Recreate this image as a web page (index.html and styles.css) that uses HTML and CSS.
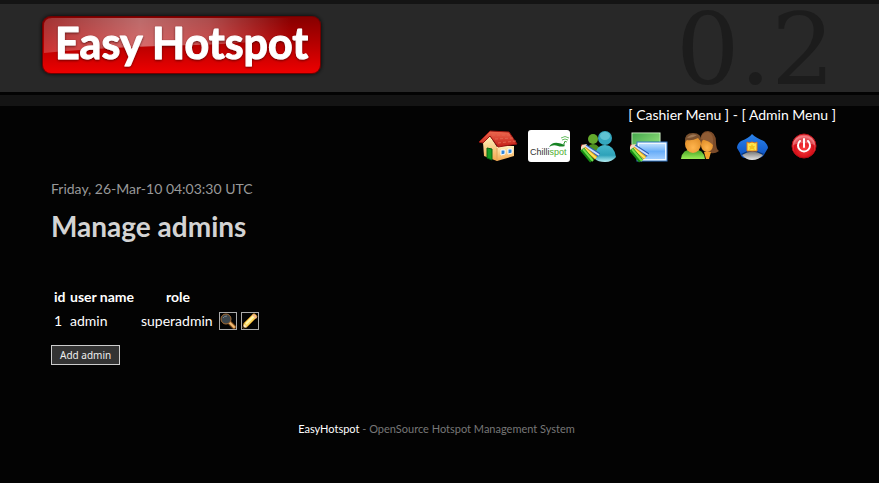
FILE: index.html
```html
<!DOCTYPE html>
<html lang="en">
<head>
    <meta charset="UTF-8">
    <meta name="viewport" content="width=device-width, initial-scale=1.0">
    <title>Easy Hotspot - Manage admins</title>
    <link rel="stylesheet" href="styles.css">
</head>
<body>
    <header class="header">
        <a class="logo" href="#" aria-label="Easy Hotspot">
            <svg width="292" height="76" viewBox="0 0 292 76">
                <defs>
                    <linearGradient id="logo-red" x1="0" y1="0" x2="0" y2="1">
                        <stop offset="0" stop-color="#860000"/>
                        <stop offset="0.5" stop-color="#b80000"/>
                        <stop offset="1" stop-color="#ee0000"/>
                    </linearGradient>
                    <linearGradient id="logo-shine" x1="0" y1="0" x2="1" y2="0">
                        <stop offset="0" stop-color="#fff" stop-opacity="0.2"/>
                        <stop offset="0.35" stop-color="#fff" stop-opacity="0.42"/>
                        <stop offset="0.6" stop-color="#fff" stop-opacity="0.3"/>
                        <stop offset="0.9" stop-color="#fff" stop-opacity="0"/>
                    </linearGradient>
                    <filter id="logo-shadow" x="-10%" y="-20%" width="120%" height="140%">
                        <feDropShadow dx="0" dy="0" stdDeviation="2" flood-color="#000" flood-opacity="0.9"/>
                    </filter>
                    <filter id="text-shadow" x="-10%" y="-20%" width="120%" height="150%">
                        <feDropShadow dx="0" dy="1" stdDeviation="1" flood-color="#300" flood-opacity="0.7"/>
                    </filter>
                </defs>
                <rect x="6" y="7" width="279" height="58" rx="9" fill="#700000" filter="url(#logo-shadow)"/>
                <rect x="7" y="8" width="277" height="56" rx="8" fill="url(#logo-red)"/>
                <path d="M16 9H274Q283 9 283 16V24Q230 34 160 36Q70 38 8 44V17Q8 9 16 9Z" fill="url(#logo-shine)"/>
                <text class="logo-text" x="19" y="50" filter="url(#text-shadow)">Easy Hotspot</text>
            </svg>
        </a>
        <span class="version">0.2</span>
    </header>

    <nav class="nav">
        <div class="menu-links">
            <a href="#">[ Cashier Menu ]</a> - <a href="#">[ Admin Menu ]</a>
        </div>
        <div class="menu-icons">
            <a href="#" aria-label="Home">
                <svg width="42" height="36" viewBox="0 0 42 36">
                    <defs>
                        <linearGradient id="wall" x1="0" y1="0" x2="0" y2="1">
                            <stop offset="0" stop-color="#fff3c0"/>
                            <stop offset="1" stop-color="#f3a64d"/>
                        </linearGradient>
                        <linearGradient id="roof" x1="0" y1="0" x2="0" y2="1">
                            <stop offset="0" stop-color="#ef6a50"/>
                            <stop offset="1" stop-color="#c41f17"/>
                        </linearGradient>
                    </defs>
                    <path d="M6 14L13 8L20 19V33L7 28Z" fill="url(#wall)"/>
                    <path d="M20 18H37V28L20 33Z" fill="url(#wall)"/>
                    <path d="M10 20L15 21V32L10 30Z" fill="#159b22" stroke="#096410"/>
                    <path d="M13 3L32 4L40 16L21 19L13 8L6 15L2 14Z" fill="url(#roof)" stroke="#9c1712"/>
                    <path d="M15 7H33M18 11L36 10M21 15L39 13" fill="none" stroke="#e3644f" stroke-width="1" stroke-dasharray="3 2"/>
                    <path d="M24 22H28V26L24 27ZM31 21H35V25L31 26Z" fill="#2f86dc" stroke="#fff"/>
                    <path d="M20 33V20" stroke="#e0a258"/>
                </svg>
            </a>
            <a href="#" aria-label="Chillispot">
                <svg width="42" height="36" viewBox="0 0 42 36">
                    <rect x="0" y="2" width="42" height="32" rx="3" fill="#fff"/>
                    <path d="M21 19Q24 14 30 15Q36 16 37 18Q33 19 30 18Q25 16 21 19Z" fill="#168323"/>
                    <path d="M36 17Q35 15 38 13" fill="none" stroke="#168323" stroke-width="1"/>
                    <path d="M33 10Q37 7 41 10M34 12Q37 10 40 12M36 14Q37 13 39 14" fill="none" stroke="#68bd62" stroke-width="1"/>
                    <text class="chilli-text" x="2" y="27">Chilli<tspan fill="#4faf2f">spot</tspan></text>
                </svg>
            </a>
            <a href="#" aria-label="Manage accounts">
                <svg width="42" height="36" viewBox="0 0 42 36">
                    <defs>
                        <linearGradient id="teal" x1="0" y1="0" x2="0" y2="1">
                            <stop offset="0" stop-color="#47b9cd"/>
                            <stop offset="0.6" stop-color="#2ea2b9"/>
                            <stop offset="1" stop-color="#b5f0f4"/>
                        </linearGradient>
                        <g id="pens">
                            <path d="M6 18L20 27" stroke="#2a5db8" stroke-width="4"/>
                            <path d="M6 18L20 27" stroke="#c8dcff" stroke-width="2"/>
                            <path d="M5 20L17 30" stroke="#e2a31c" stroke-width="4"/>
                            <path d="M5 20L17 30" stroke="#ffe45c" stroke-width="2"/>
                            <path d="M3 21L13 33" stroke="#168a14" stroke-width="5"/>
                            <path d="M4 21L14 33" stroke="#6fdf48" stroke-width="2"/>
                            <path d="M2 22L2 17L8 16L6 19Z" fill="#f1dcc0"/>
                            <path d="M2 19V17L4 16Z" fill="#b22323"/>
                        </g>
                    </defs>
                    <circle cx="14" cy="11" r="5" fill="#64a92c"/>
                    <path d="M7 26Q8 16 14 16Q21 16 22 27Z" fill="#4d9020"/>
                    <path d="M16 31Q16 17 26 17Q35 17 37 29Q33 34 26 34Q19 34 16 31Z" fill="url(#teal)"/>
                    <circle cx="26" cy="10" r="7" fill="#35a8bf"/>
                    <ellipse cx="26" cy="8" rx="5" ry="4" fill="#7cd3e0" opacity="0.6"/>
                    <use href="#pens"/>
                </svg>
            </a>
            <a href="#" aria-label="Manage plans">
                <svg width="42" height="36" viewBox="0 0 42 36">
                    <defs>
                        <linearGradient id="green-card" x1="0" y1="0" x2="1" y2="1">
                            <stop offset="0" stop-color="#159220"/>
                            <stop offset="1" stop-color="#8ce667"/>
                        </linearGradient>
                        <linearGradient id="blue-card" x1="0" y1="0" x2="0" y2="1">
                            <stop offset="0" stop-color="#c8e5ff"/>
                            <stop offset="0.5" stop-color="#6aaef8"/>
                            <stop offset="1" stop-color="#a7d1ff"/>
                        </linearGradient>
                    </defs>
                    <rect x="2" y="5" width="28" height="19" fill="url(#green-card)" stroke="#d8f7ce" stroke-width="1"/>
                    <path d="M3 6H29V13Q15 13 3 18Z" fill="#fff" opacity="0.2"/>
                    <rect x="8" y="15" width="28" height="17" fill="url(#blue-card)" stroke="#eef7ff" stroke-width="2"/>
                    <rect x="7" y="14" width="30" height="19" fill="none" stroke="#3478c8" stroke-width="1"/>
                    <use href="#pens" x="-2"/>
                </svg>
            </a>
            <a href="#" aria-label="Manage cashiers">
                <svg width="42" height="36" viewBox="0 0 42 36">
                    <defs>
                        <radialGradient id="face" cx="0.5" cy="0.7" r="0.6">
                            <stop offset="0" stop-color="#ffb54e"/>
                            <stop offset="1" stop-color="#e2902a"/>
                        </radialGradient>
                        <linearGradient id="shirt" x1="0" y1="0" x2="0" y2="1">
                            <stop offset="0" stop-color="#3c9a20"/>
                            <stop offset="1" stop-color="#9bed58"/>
                        </linearGradient>
                    </defs>
                    <path d="M19 12Q20 3 27 3Q35 4 35 14Q35 21 38 23Q33 27 26 24Q19 20 19 12Z" fill="#7b4b29"/>
                    <path d="M23 24H30L28 31H25Z" fill="#f4a32d"/>
                    <ellipse cx="26" cy="17" rx="6" ry="7" fill="url(#face)"/>
                    <path d="M20 11Q29 13 32 17Q33 5 27 4Q20 5 20 11Z" fill="#8f5c35"/>
                    <path d="M0 31Q1 21 12 21Q23 21 24 31Z" fill="url(#shirt)"/>
                    <ellipse cx="12" cy="16" rx="8" ry="9" fill="url(#face)"/>
                    <path d="M4 14Q3 5 12 5Q21 5 20 14Q19 12 17 10Q11 13 6 12Z" fill="#79502e"/>
                    <path d="M6 10Q10 5 16 7Q12 10 6 10Z" fill="#b99472" opacity="0.6"/>
                </svg>
            </a>
            <a href="#" aria-label="Manage admins">
                <svg width="42" height="36" viewBox="0 0 42 36">
                    <defs>
                        <linearGradient id="cap" x1="0" y1="0" x2="0" y2="1">
                            <stop offset="0" stop-color="#2c84ec"/>
                            <stop offset="1" stop-color="#0b4fc0"/>
                        </linearGradient>
                        <linearGradient id="visor" x1="0" y1="0" x2="0" y2="1">
                            <stop offset="0" stop-color="#777"/>
                            <stop offset="1" stop-color="#e8e8e8"/>
                        </linearGradient>
                    </defs>
                    <path d="M20 6Q24 10 32 13Q36 17 36 20L33 25Q31 30 27 30H13Q9 30 8 25L5 20Q5 16 9 13Q17 10 20 6Z" fill="url(#cap)"/>
                    <path d="M9 26Q20 19 32 26L28 29Q20 24 13 29Z" fill="#083579"/>
                    <path d="M10 27Q20 20 31 27Q27 32 20 32Q14 32 10 27Z" fill="url(#visor)"/>
                    <path d="M15 14L17 15L20 14L23 15L25 14V23H15Z" fill="#ffe64c" stroke="#df761a" stroke-width="1"/>
                    <path d="M20 16L21 18H23L22 20L23 22L20 21L17 22L18 20L17 18H19Z" fill="#f4c31f"/>
                </svg>
            </a>
            <a href="#" aria-label="Log out">
                <svg width="42" height="36" viewBox="0 0 42 36">
                    <defs>
                        <radialGradient id="power" cx="0.5" cy="0.6" r="0.5">
                            <stop offset="0" stop-color="#ff4242"/>
                            <stop offset="0.8" stop-color="#d60f18"/>
                            <stop offset="1" stop-color="#ef5960"/>
                        </radialGradient>
                    </defs>
                    <circle cx="21" cy="18" r="12" fill="url(#power)" stroke="#b60d14"/>
                    <path d="M10 17Q11 8 21 8Q31 8 32 17Q21 13 10 17Z" fill="#fff" opacity="0.25"/>
                    <path d="M17 13A6 6 0 1 0 25 13M21 11V19" fill="none" stroke="#fff" stroke-width="2" stroke-linecap="round"/>
                </svg>
            </a>
        </div>
    </nav>

    <main class="content">
        <p class="date">Friday, 26-Mar-10 04:03:30 UTC</p>
        <h1>Manage admins</h1>
        <table class="admins">
            <thead>
                <tr>
                    <th class="col-id">id</th>
                    <th class="col-user">user name</th>
                    <th class="col-role">role</th>
                    <td></td>
                </tr>
            </thead>
            <tbody>
                <tr>
                    <td>1</td>
                    <td>admin</td>
                    <td>superadmin</td>
                    <td>
                        <div class="actions">
                            <a href="#" aria-label="View admin">
                                <svg width="16" height="16" viewBox="0 0 16 16">
                                    <path d="M9 9L14 14" stroke="#8c5520" stroke-width="4" stroke-linecap="round"/>
                                    <path d="M10 10L14 14" stroke="#f2bd75" stroke-width="2" stroke-linecap="round"/>
                                    <circle cx="6" cy="6" r="5" fill="#3c454b" stroke="#a46d36" stroke-width="1"/>
                                    <path d="M3 5Q4 3 7 3" fill="none" stroke="#78858c"/>
                                </svg>
                            </a>
                            <a href="#" aria-label="Edit admin">
                                <svg width="16" height="16" viewBox="0 0 16 16">
                                    <path d="M1 15L2 10L11 1Q13 0 15 3Q15 4 14 5L5 14Z" fill="#f6d45b" stroke="#a57119"/>
                                    <path d="M4 11L12 3" stroke="#fff4ac" stroke-width="2"/>
                                    <path d="M10 2L12 1L15 4L14 6Z" fill="#f3b590"/>
                                    <path d="M1 15L2 11L5 14Z" fill="#ffe5bd"/>
                                    <path d="M1 15V13L3 15Z" fill="#222"/>
                                </svg>
                            </a>
                        </div>
                    </td>
                </tr>
            </tbody>
        </table>
        <button class="add-btn" type="button">Add admin</button>
    </main>

    <footer class="footer">
        <a href="#">EasyHotspot</a> - OpenSource Hotspot Management System
    </footer>
</body>
</html>
```

FILE: styles.css
```css
body {
    margin: 0;
    background-color: #030303;
    color: #fff;
    font-family: "Trebuchet MS", Lato, sans-serif;
    font-size: 14px;
    line-height: 18px;
}

a {
    color: #fff;
    text-decoration: none;
}

svg {
    display: block;
}

.header {
    display: flex;
    justify-content: space-between;
    align-items: flex-start;
    padding: 0 44px 0 36px;
    background-color: #282828;
    border-top: 4px solid #141414;
    border-bottom: 3px solid #030303;
}

.logo {
    padding: 5px 0 7px;
}

.logo-text {
    font-family: Lato, sans-serif;
    font-size: 43px;
    font-weight: bold;
    fill: #fff;
    stroke: #fff;
    stroke-width: 1px;
    stroke-linejoin: round;
}

.version {
    padding-top: 4px;
    color: #1c1c1c;
    font-family: "DejaVu Serif", serif;
    font-size: 100px;
    line-height: 84px;
}

.nav {
    display: flex;
    flex-direction: column;
    align-items: flex-end;
    padding: 0 43px;
    border-top: 11px solid #141414;
}

.menu-icons {
    display: flex;
    gap: 9px;
    margin-top: 4px;
    margin-right: 11px;
}

.chilli-text {
    font-family: "Liberation Sans", sans-serif;
    font-size: 9px;
    fill: #333;
}

.content {
    padding: 16px 51px 0;
}

.date {
    margin: 0;
    color: #999;
}

h1 {
    margin: 12px 0 42px;
    color: #d3d3d3;
    font-size: 28px;
    line-height: 32px;
}

.admins {
    border-spacing: 2px;
    line-height: 20px;
}

.admins th,
.admins td {
    padding: 1px;
    text-align: left;
}

.admins .col-id {
    width: 12px;
}

.admins .col-user {
    width: 67px;
}

.admins .col-role {
    width: 74px;
    text-align: center;
}

.actions {
    display: flex;
    gap: 4px;
}

.actions a {
    border: 1px solid #aaa;
}

.add-btn {
    margin-top: 11px;
    padding: 2px 8px;
    background-color: #333;
    border: 1px solid #ccc;
    color: #eee;
    font-family: "Noto Sans", sans-serif;
    font-size: 10px;
    line-height: 14px;
    cursor: pointer;
}

.footer {
    padding: 55px 6px 40px 0;
    color: #777;
    font-size: 11px;
    text-align: center;
}
```
